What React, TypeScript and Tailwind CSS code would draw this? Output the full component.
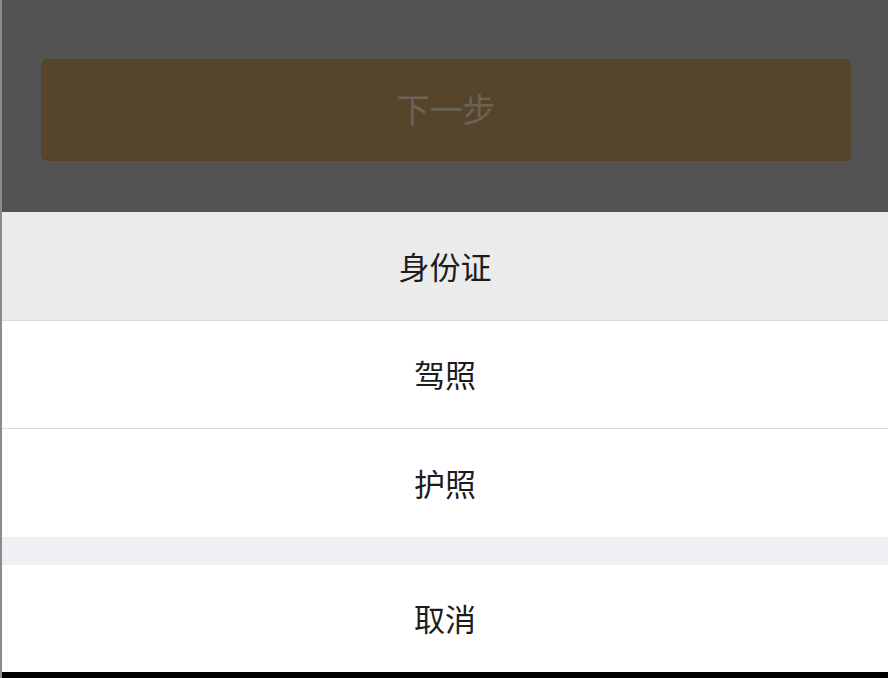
import React from 'react';

const font = { fontFamily: '"Noto Sans CJK SC", "Noto Sans", sans-serif' };

const options = ['身份证', '驾照', '护照'];

const App: React.FC = () => {
  return (
    <div className="flex h-[678px] w-[888px] overflow-hidden bg-black" style={font}>
      <div className="w-[2px] shrink-0 bg-[#8c8c8c]" />
      <div className="flex flex-1 flex-col">
        {/* dimmed page behind the sheet */}
        <div className="flex h-[212px] shrink-0 flex-col bg-[#535353] pl-[39px] pr-[37px] pt-[59px]">
          <div className="flex h-[102px] items-center justify-center rounded-[6px] bg-[#56452a] pb-[3px] text-[33px] text-[#6c6357]">
            下一步
          </div>
        </div>
        {/* action sheet */}
        <div className="flex flex-col">
          {options.map((label, i) => (
            <div
              key={label}
              className={
                i === 0
                  ? 'flex h-[109px] items-center justify-center border-b border-[#dadada] bg-[#ebebeb] text-[31px] text-[#1c1c1c]'
                  : i === 1
                  ? 'flex h-[108px] items-center justify-center border-b border-[#dadada] bg-white text-[31px] text-[#1c1c1c]'
                  : 'flex h-[108px] items-center justify-center bg-white text-[31px] text-[#1c1c1c]'
              }
            >
              {label}
            </div>
          ))}
          <div className="h-[28px] bg-[#efeff4]" />
          <div className="flex h-[107px] items-center justify-center bg-white text-[31px] text-[#1c1c1c]">
            取消
          </div>
        </div>
      </div>
    </div>
  );
};

export default App;
